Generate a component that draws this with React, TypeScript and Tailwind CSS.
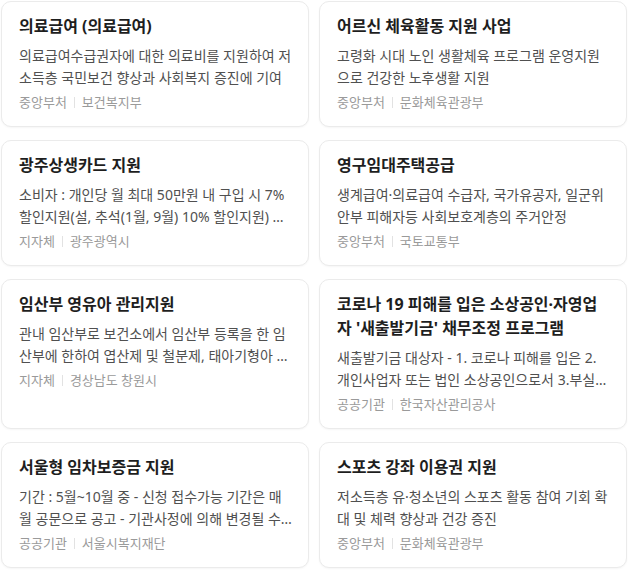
const items = [
  {
    title: '의료급여 (의료급여)',
    desc: '의료급여수급권자에 대한 의료비를 지원하여 저소득층 국민보건 향상과 사회복지 증진에 기여',
    type: '중앙부처',
    org: '보건복지부',
  },
  {
    title: '어르신 체육활동 지원 사업',
    desc: '고령화 시대 노인 생활체육 프로그램 운영지원으로 건강한 노후생활 지원',
    type: '중앙부처',
    org: '문화체육관광부',
  },
  {
    title: '광주상생카드 지원',
    desc: '소비자 : 개인당 월 최대 50만원 내 구입 시 7% 할인지원(설, 추석(1월, 9월) 10% 할인지원) 가맹점 : 카드수수료 지원',
    type: '지자체',
    org: '광주광역시',
  },
  {
    title: '영구임대주택공급',
    desc: '생계급여·의료급여 수급자, 국가유공자, 일군위안부 피해자등 사회보호계층의 주거안정',
    type: '중앙부처',
    org: '국토교통부',
  },
  {
    title: '임산부 영유아 관리지원',
    desc: '관내 임산부로 보건소에서 임산부 등록을 한 임산부에 한하여 엽산제 및 철분제, 태아기형아 검사 등 지원',
    type: '지자체',
    org: '경상남도 창원시',
  },
  {
    title: "코로나 19 피해를 입은 소상공인·자영업자 '새출발기금' 채무조정 프로그램",
    desc: '새출발기금 대상자 - 1. 코로나 피해를 입은 2. 개인사업자 또는 법인 소상공인으로서 3.부실 또는 부실우려 차주',
    type: '공공기관',
    org: '한국자산관리공사',
  },
  {
    title: '서울형 임차보증금 지원',
    desc: '기간 : 5월~10월 중 - 신청 접수가능 기간은 매월 공문으로 공고 - 기관사정에 의해 변경될 수 있음',
    type: '공공기관',
    org: '서울시복지재단',
  },
  {
    title: '스포츠 강좌 이용권 지원',
    desc: '저소득층 유·청소년의 스포츠 활동 참여 기회 확대 및 체력 향상과 건강 증진',
    type: '중앙부처',
    org: '문화체육관광부',
  },
];

export default function App() {
  return (
    <div className="min-h-screen bg-white font-['Noto_Sans','Noto_Sans_CJK_KR',sans-serif]">
      <div className="grid grid-cols-[308px_308px] gap-x-[10px] gap-y-[13px] pl-[1px] pt-[1px]">
        {items.map((item) => (
          <div
            key={item.title}
            className="rounded-[10px] border border-[#ebebeb] bg-white pl-[17px] pr-[15px] pt-[12px] pb-[14px] shadow-[0_1px_2px_rgba(0,0,0,0.04)]"
          >
            <h3 className="text-[16px] leading-[24px] font-bold text-[#1e1e1e]">{item.title}</h3>
            <p className="mt-[7px] line-clamp-2 text-[14px] leading-[22px] text-[#505050]">{item.desc}</p>
            <div className="mt-[3px] flex items-center text-[13px] leading-[20px] text-[#9a9a9a]">
              <span>{item.type}</span>
              <span className="mx-[7px] h-[11px] w-px bg-[#e2e2e2]" />
              <span>{item.org}</span>
            </div>
          </div>
        ))}
      </div>
    </div>
  );
}
